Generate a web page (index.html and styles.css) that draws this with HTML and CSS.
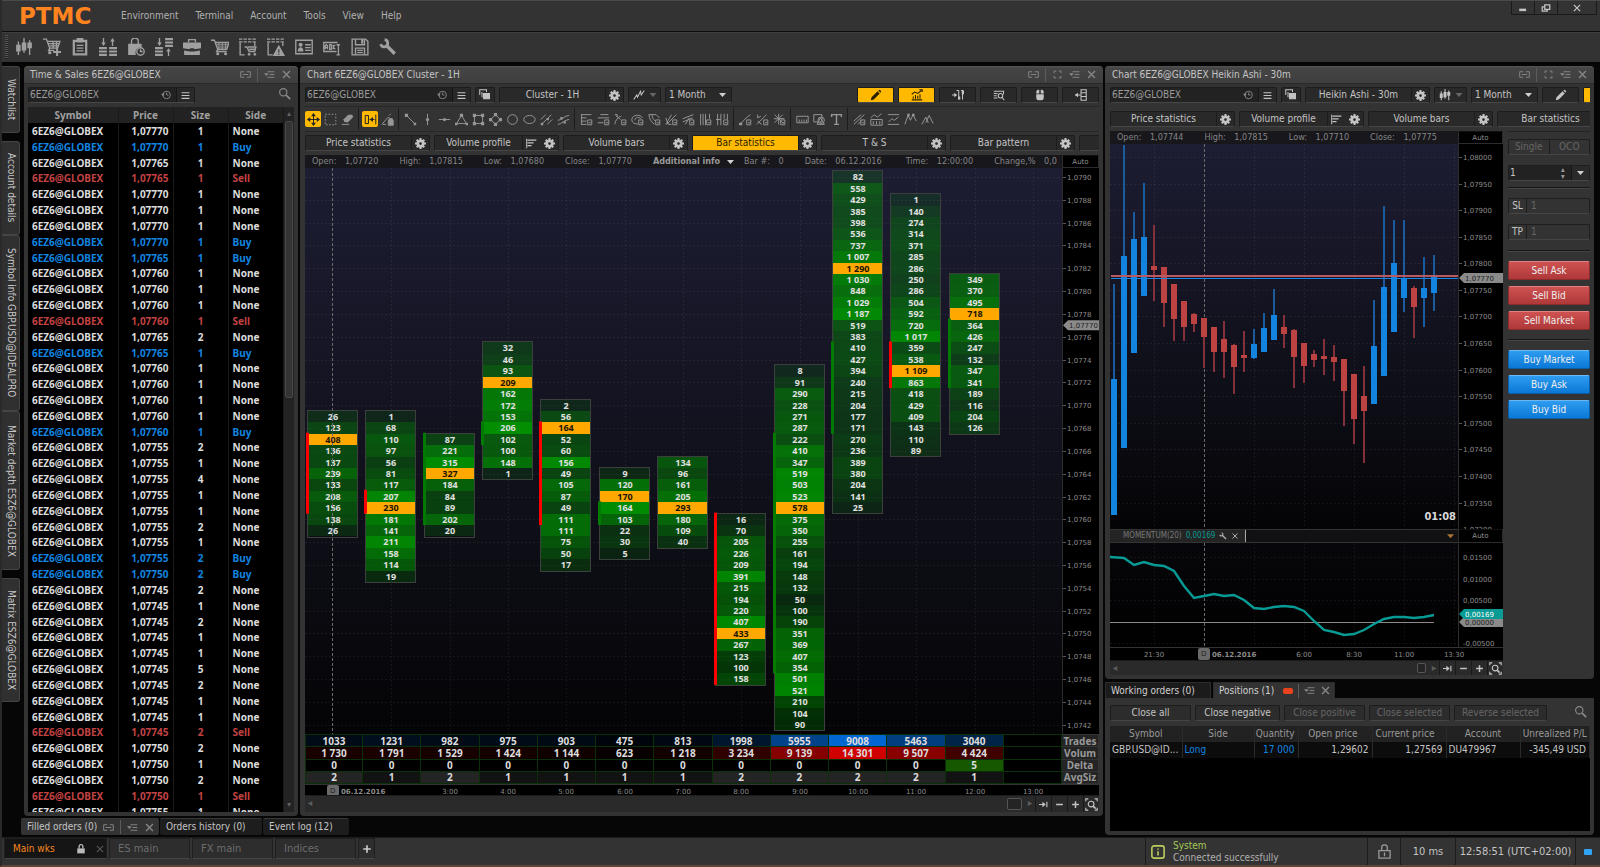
FILE: index.html
```html
<!DOCTYPE html>
<html lang="en">
<head>
  <meta charset="UTF-8">
  <meta name="viewport" content="width=device-width, initial-scale=1.0">
  <title>PTMC</title>
  <link rel="stylesheet" href="styles.css">
</head>
<body>
  <header class="topbar">
    <div class="logo">PTMC</div>
    <nav class="menu">
      <a href="#">Environment</a>
      <a href="#">Terminal</a>
      <a href="#">Account</a>
      <a href="#">Tools</a>
      <a href="#">View</a>
      <a href="#">Help</a>
    </nav>
    <div class="win-controls">
      <button aria-label="Minimize"><svg class="ic" data-icon="minimize"></svg></button>
      <button aria-label="Restore"><svg class="ic" data-icon="restore"></svg></button>
      <button class="wide" aria-label="Close"><svg class="ic" data-icon="close"></svg></button>
    </div>
  </header>

  <div class="toolbar">
    <span class="grip"></span>
    <button aria-label="Chart"><svg class="ic" data-icon="candles"></svg></button>
    <button aria-label="New order"><svg class="ic" data-icon="cartplus"></svg></button>
    <button aria-label="Watchlist"><svg class="ic" data-icon="clipboard"></svg></button>
    <button aria-label="Market depth"><svg class="ic" data-icon="depth"></svg></button>
    <button aria-label="Time and sales"><svg class="ic" data-icon="bag"></svg></button>
    <button aria-label="Matrix"><svg class="ic" data-icon="matrix"></svg></button>
    <button aria-label="Portfolio"><svg class="ic" data-icon="briefcase"></svg></button>
    <button aria-label="Orders"><svg class="ic" data-icon="cart"></svg></button>
    <button aria-label="Order history"><svg class="ic" data-icon="listcart"></svg></button>
    <button aria-label="Alerts"><svg class="ic" data-icon="listalert"></svg></button>
    <button aria-label="Account"><svg class="ic" data-icon="idcard"></svg></button>
    <button aria-label="Symbol info"><svg class="ic" data-icon="abc"></svg></button>
    <button aria-label="Save"><svg class="ic" data-icon="save"></svg></button>
    <button aria-label="Settings"><svg class="ic" data-icon="wrench"></svg></button>
  </div>

  <main class="workspace">
    <aside class="side-tabs">
      <button class="st-1">Watchlist</button>
      <button class="st-2">Account details</button>
      <button class="st-3">Symbol info GBP.USD@IDEALPRO</button>
      <button class="st-4">Market depth ESZ6@GLOBEX</button>
      <button class="st-5">Matrix ESZ6@GLOBEX</button>
    </aside>

    <section class="panel sales">
      <div class="panel-title">
        <h2>Time &amp; Sales 6EZ6@GLOBEX</h2>
        <svg class="ic" data-icon="link"></svg><i></i>
        <svg class="ic" data-icon="menu"></svg>
        <svg class="ic" data-icon="close"></svg>
      </div>
      <div class="row">
        <div class="symbol-box">
          <input type="text" value="6EZ6@GLOBEX" aria-label="Symbol">
          <svg class="ic" data-icon="clock"></svg>
          <button aria-label="Symbol list"><svg class="ic" data-icon="list"></svg></button>
        </div>
        <svg class="ic push search" data-icon="search"></svg>
      </div>
      <div class="sales-wrap">
        <table class="sales-table">
          <thead>
            <tr><th class="c-symbol">Symbol</th><th class="c-price">Price</th><th class="c-size">Size</th><th>Side</th></tr>
          </thead>
          <tbody id="sales-rows"></tbody>
        </table>
        <div class="vscroll"><span>▴</span><b></b><span>▾</span></div>
      </div>
    </section>

    <section class="panel chart-panel">
      <div class="panel-title">
        <h2>Chart 6EZ6@GLOBEX Cluster - 1H</h2>
        <svg class="ic" data-icon="link"></svg><i></i>
        <svg class="ic" data-icon="expand"></svg>
        <svg class="ic" data-icon="menu"></svg>
        <svg class="ic" data-icon="close"></svg>
      </div>
      <div class="row">
        <div class="symbol-box">
          <input type="text" value="6EZ6@GLOBEX" aria-label="Chart symbol">
          <svg class="ic" data-icon="clock"></svg>
          <button aria-label="Symbol list"><svg class="ic" data-icon="list"></svg></button>
        </div>
        <button class="ctl sq" aria-label="Copy"><svg class="ic" data-icon="copy"></svg></button>
        <div class="split"><button>Cluster - 1H</button><button class="gear" aria-label="Settings"><svg class="ic" data-icon="gear"></svg></button></div>
        <button class="ctl mid" aria-label="Line style"><svg class="ic" data-icon="zigzag"></svg><span class="caret dim"></span></button>
        <div class="select"><select aria-label="Period"><option>1 Month</option></select><span class="caret"></span></div>
        <button class="ctl lg on push" aria-label="Draw"><svg class="ic" data-icon="pencil"></svg></button>
        <button class="ctl lg on" aria-label="Indicators"><svg class="ic" data-icon="growth"></svg></button>
        <button class="ctl lg" aria-label="Bars"><svg class="ic" data-icon="barstyle"></svg></button>
        <button class="ctl lg" aria-label="Find"><svg class="ic" data-icon="listsearch"></svg></button>
        <button class="ctl lg" aria-label="Mouse trading"><svg class="ic" data-icon="mouse"></svg></button>
        <button class="ctl lg" aria-label="Side panel"><svg class="ic" data-icon="sidepanel"></svg></button>
      </div>
      <div class="draw-tools" id="draw-tools"></div>
      <div class="row tabs">
        <div class="split"><button>Price statistics</button><button class="gear" aria-label="Settings"><svg class="ic" data-icon="gear"></svg></button></div>
        <div class="split"><button>Volume profile</button><button class="gear" aria-label="Profile"><svg class="ic" data-icon="profile"></svg></button><button class="gear bare" aria-label="Settings"><svg class="ic" data-icon="gear"></svg></button></div>
        <div class="split"><button>Volume bars</button><button class="gear" aria-label="Settings"><svg class="ic" data-icon="gear"></svg></button></div>
        <div class="split"><button class="on">Bar statistics</button><button class="gear" aria-label="Settings"><svg class="ic" data-icon="gear"></svg></button></div>
        <div class="split"><button>T &amp; S</button><button class="gear" aria-label="Settings"><svg class="ic" data-icon="gear"></svg></button></div>
        <div class="split"><button>Bar pattern</button><button class="gear" aria-label="Settings"><svg class="ic" data-icon="gear"></svg></button></div>
        <div class="split"><button aria-label="More"></button></div>
      </div>
      <div class="cluster">
        <div class="info">
          <span>Open: <em>1,07720</em></span>
          <span>High: <em>1,07815</em></span>
          <span>Low: <em>1,07680</em></span>
          <span>Close: <em>1,07770</em></span>
          <b>Additional info <u class="caret"></u></b>
          <span class="near">Bar #: <em>0</em></span>
          <span>Date: <em>06.12.2016</em></span>
          <span class="far">Time: <em>12:00:00</em></span>
          <span>Change,% <em>0,0</em></span>
        </div>
        <button class="auto">Auto</button>
        <svg class="plot" id="cluster-plot"></svg>
        <svg class="axis" id="cluster-axis"></svg>
        <table class="stats" id="stats"></table>
        <svg class="time" id="cluster-time"></svg>
        <div class="hscroll">
          <span class="arrow">◂</span><span class="thumb wide"></span><span class="arrow">▸</span>
          <button aria-label="To end"><svg class="ic" data-icon="toend"></svg></button>
          <button aria-label="Zoom out"><svg class="ic" data-icon="minus"></svg></button>
          <button aria-label="Zoom in"><svg class="ic" data-icon="plus"></svg></button>
          <button aria-label="Fit"><svg class="ic" data-icon="fit"></svg></button>
        </div>
      </div>
    </section>

    <div class="right">
      <section class="panel chart-panel">
        <div class="panel-title">
          <h2>Chart 6EZ6@GLOBEX Heikin Ashi - 30m</h2>
          <svg class="ic" data-icon="link"></svg><i></i>
          <svg class="ic" data-icon="expand"></svg>
          <svg class="ic" data-icon="menu"></svg>
          <svg class="ic" data-icon="close"></svg>
        </div>
        <div class="row">
          <div class="symbol-box">
            <input type="text" value="6EZ6@GLOBEX" aria-label="Chart symbol">
            <svg class="ic" data-icon="clock"></svg>
            <button aria-label="Symbol list"><svg class="ic" data-icon="list"></svg></button>
          </div>
          <button class="ctl sq" aria-label="Copy"><svg class="ic" data-icon="copy"></svg></button>
          <div class="split"><button>Heikin Ashi - 30m</button><button class="gear" aria-label="Settings"><svg class="ic" data-icon="gear"></svg></button></div>
          <button class="ctl mid" aria-label="Chart style"><svg class="ic" data-icon="candles"></svg><span class="caret dim"></span></button>
          <div class="select"><select aria-label="Period"><option>1 Month</option></select><span class="caret"></span></div>
          <button class="ctl lg" aria-label="Draw"><svg class="ic" data-icon="pencil"></svg></button>
          <button class="ctl lg on" aria-label="Indicators"></button>
        </div>
        <div class="row tabs ruled">
          <div class="split"><button>Price statistics</button><button class="gear" aria-label="Settings"><svg class="ic" data-icon="gear"></svg></button></div>
          <div class="split"><button>Volume profile</button><button class="gear" aria-label="Profile"><svg class="ic" data-icon="profile"></svg></button><button class="gear bare" aria-label="Settings"><svg class="ic" data-icon="gear"></svg></button></div>
          <div class="split"><button>Volume bars</button><button class="gear" aria-label="Settings"><svg class="ic" data-icon="gear"></svg></button></div>
          <div class="split"><button>Bar statistics</button><button class="gear" aria-label="Settings"><svg class="ic" data-icon="gear"></svg></button></div>
        </div>
        <div class="heikin-wrap">
          <div class="heikin">
            <div class="info">
              <span>Open: <em>1,07744</em></span>
              <span>High: <em>1,07815</em></span>
              <span>Low: <em>1,07710</em></span>
              <span>Close: <em>1,07775</em></span>
              <b>Additional info</b>
            </div>
            <button class="auto">Auto</button>
            <svg class="plot" id="heikin-plot"></svg>
            <svg class="axis" id="heikin-axis"></svg>
            <div class="indicator">
              <span class="ind-name">MOMENTUM(20) <em>0,00169</em><svg class="ic" data-icon="wrench"></svg><svg class="ic" data-icon="close"></svg></span>
              <span class="caret amber"></span>
            </div>
            <button class="auto">Auto</button>
            <svg class="plot low" id="momentum-plot"></svg>
            <svg class="axis" id="momentum-axis"></svg>
            <svg class="time" id="heikin-time"></svg>
            <div class="hscroll">
              <span class="arrow">◂</span><span class="thumb"></span><span class="arrow">▸</span>
              <button aria-label="To end"><svg class="ic" data-icon="toend"></svg></button>
              <button aria-label="Zoom out"><svg class="ic" data-icon="minus"></svg></button>
              <button aria-label="Zoom in"><svg class="ic" data-icon="plus"></svg></button>
              <button aria-label="Fit"><svg class="ic" data-icon="fit"></svg></button>
            </div>
          </div>
          <form class="order">
            <div class="pair"><button type="button" disabled>Single</button><button type="button" disabled>OCO</button></div>
            <div class="qty"><input type="text" value="1" aria-label="Quantity"><span class="spin"><i>▴</i><i>▾</i></span><button type="button" aria-label="Presets"><span class="caret"></span></button></div>
            <hr>
            <div class="stop"><label for="sl">SL</label><input id="sl" type="text" value="1"></div>
            <div class="stop"><label for="tp">TP</label><input id="tp" type="text" value="1"></div>
            <hr>
            <div class="deals">
              <button type="button" class="sell">Sell Ask</button>
              <button type="button" class="sell">Sell Bid</button>
              <button type="button" class="sell">Sell Market</button>
            </div>
            <hr>
            <div class="deals">
              <button type="button" class="buy">Buy Market</button>
              <button type="button" class="buy">Buy Ask</button>
              <button type="button" class="buy">Buy Bid</button>
            </div>
          </form>
        </div>
      </section>

      <section class="positions">
        <div class="pos-tabs">
          <button>Working orders (0)</button>
          <button class="active">Positions (1) <span class="led"></span><i></i><svg class="ic" data-icon="menu"></svg><svg class="ic" data-icon="close"></svg></button>
        </div>
        <div class="pos-body">
          <div class="pos-buttons">
            <button>Close all</button>
            <button>Close negative</button>
            <button disabled>Close positive</button>
            <button disabled>Close selected</button>
            <button class="last" disabled>Reverse selected</button>
            <svg class="ic push search" data-icon="search"></svg>
          </div>
          <div class="pos-wrap">
            <table class="pos-table">
              <colgroup><col class="w72"><col class="w72"><col class="w44"><col class="w74"><col class="w74"><col class="w74"><col></colgroup>
              <thead>
                <tr><th>Symbol</th><th>Side</th><th class="r">Quantity</th><th class="r mid">Open price</th><th class="l">Current price</th><th>Account</th><th>Unrealized P/L</th></tr>
              </thead>
              <tbody>
                <tr><td>GBP.USD@ID...</td><td class="blue">Long</td><td class="r blue">17 000</td><td class="r">1,29602</td><td class="r">1,27569</td><td>DU479967</td><td class="r">-345,49 USD</td></tr>
              </tbody>
            </table>
          </div>
        </div>
      </section>
    </div>

    <div class="bottom-tabs">
      <button class="active">Filled orders (0) <svg class="ic" data-icon="link"></svg><i></i><svg class="ic" data-icon="menu"></svg><svg class="ic" data-icon="close"></svg></button>
      <button>Orders history (0)</button>
      <button class="short">Event log (12)</button>
    </div>
  </main>

  <footer class="status">
    <div class="wks">
      <button class="active">Main wks <svg class="ic" data-icon="lock"></svg><svg class="ic dim" data-icon="close"></svg></button>
      <button>ES main</button>
      <button>FX main</button>
      <button>Indices</button>
      <button class="add" aria-label="Add workspace"><svg class="ic" data-icon="plus"></svg></button>
    </div>
    <div class="system">
      <svg class="ic" data-icon="info"></svg>
      <p><b>System</b><br>Connected successfully</p>
    </div>
    <div class="cell lock"><svg class="ic" data-icon="lockline"></svg></div>
    <div class="cell ping">10 ms</div>
    <div class="cell time-now">12:58:51 (UTC+02:00)</div>
    <div class="cell net"><span></span></div>
  </footer>

  <script src="script.js"></script>
</body>
</html>
```

FILE: styles.css
```css
*, *::before, *::after {
  box-sizing: border-box;
}

:root {
  --bg: #333;
  --dark: #1c1c1c;
  --ctl: #292929;
  --line: #464646;
  --text: #c4c4c4;
  --muted: #8a8a8a;
  --yellow: #ffb900;
  --blue: #1285e0;
  --red: #c24343;
}

body {
  margin: 0;
  height: 100vh;
  display: flex;
  flex-direction: column;
  overflow: hidden;
  background: var(--bg);
  color: var(--text);
  border-left: 2px solid #2a2a2a;
  border-bottom: 2px solid #5c4638;
  font: 10px/14px "DejaVu Sans Condensed", "Noto Sans", sans-serif;
}

button, input, select {
  font: inherit;
  color: inherit;
  background: none;
  border: 0;
  padding: 0;
  margin: 0;
  min-width: 0;
}

button {
  display: flex;
  align-items: center;
  justify-content: center;
  white-space: nowrap;
}

.ic {
  width: 12px;
  height: 12px;
  flex: none;
  fill: none;
  stroke: currentColor;
  stroke-width: 1.4;
}

.ic .f { fill: currentColor; stroke: none; }
.ic .b { fill: currentColor; }

.push { margin-left: auto; }

.caret {
  width: 7px;
  height: 4px;
  flex: none;
  display: inline-block;
  background: #d0d0d0;
  clip-path: polygon(0 0, 100% 0, 50% 100%);
}
.caret.dim { background: #666; }
.caret.amber { background: #a87432; }

/* header */
.topbar {
  display: flex;
  height: 32px;
  border-top: 1px solid #4a4a4a;
  border-bottom: 1px solid #0c0c0c;
  flex: none;
}

.logo {
  width: 119px;
  padding-left: 17px;
  font: bold 23px/30px "DejaVu Sans", sans-serif;
  color: #ff8420;
}

.menu {
  display: flex;
  gap: 17px;
  align-items: center;
}
.menu a {
  color: #b0b0b0;
  text-decoration: none;
}

.win-controls {
  margin-left: auto;
  margin-right: 3px;
  display: flex;
  height: 14px;
  border: 1px solid #1a1a1a;
  border-top: 0;
}
.win-controls button {
  width: 23px;
  border-right: 1px solid #1a1a1a;
}
.win-controls button.wide {
  width: 38px;
  border-right: 0;
}
.win-controls .ic {
  width: 10px;
  height: 10px;
}

.toolbar {
  display: flex;
  align-items: center;
  gap: 10px;
  height: 32px;
  flex: none;
  padding-left: 3px;
  padding-bottom: 2px;
  border-top: 1px solid #3e3e3e;
  border-bottom: 2px solid #050505;
  color: #a0a0a0;
}
.toolbar .ic, .toolbar button {
  width: 18px;
  height: 18px;
}
.toolbar .ic { stroke-width: 1.2; }
.grip {
  width: 3px;
  height: 24px;
  margin-right: -3px;
  background: repeating-linear-gradient(#555 0 1px, #262626 1px 2px);
}

/* workspace */
.workspace {
  flex: 1;
  min-height: 0;
  display: grid;
  grid-template-columns: 20px 274fr 803fr 489fr;
  grid-template-rows: minmax(0, 1fr) 17px;
  gap: 2px;
  padding: 2px 6px 2px 0;
  background: #060606;
}

.side-tabs {
  display: flex;
  flex-direction: column;
  padding-right: 2px;
}
.side-tabs button {
  writing-mode: vertical-rl;
  background: #303030;
  border: 1px solid #444;
  border-left: 0;
  border-radius: 0 3px 3px 0;
  line-height: 14px;
}
.st-1 { height: 67px; margin-bottom: 8px; }
.st-2 { height: 94px; }
.st-3 { height: 176px; }
.st-4 { height: 159px; margin-bottom: 8px; }
.st-5 { height: 124px; }

.panel {
  display: flex;
  flex-direction: column;
  min-width: 0;
  min-height: 0;
  overflow: hidden;
  padding: 0 4px 4px;
  background: var(--bg);
  border-radius: 4px;
}
.chart-panel { padding: 0 4px 4px 5px; }

.panel-title {
  display: flex;
  align-items: center;
  gap: 6px;
  height: 18px;
  flex: none;
  margin: 0 -5px 3px;
  padding: 0 7px;
  background: linear-gradient(#565656, #454545 2px, #3e3e3e);
  border-bottom: 1px solid #2a2a2a;
  color: #868686;
}
.panel-title .ic, .pos-tabs .ic, .bottom-tabs .ic {
  width: 11px;
  height: 11px;
  color: #868686;
}
.panel-title h2 {
  flex: 1;
  margin: 0;
  font-size: 10px;
  font-weight: normal;
  color: var(--text);
}
.panel-title i, .pos-tabs i, .bottom-tabs i {
  width: 1px;
  height: 14px;
  background: #5c5c5c;
}

.row {
  display: flex;
  gap: 4px;
  height: 16px;
  flex: none;
  align-items: stretch;
}
.row.tabs {
  margin-top: 3px;
  overflow: hidden;
}
.row.ruled { margin-top: 8px; }

.search {
  width: 13px;
  height: 13px;
  margin-right: 3px;
  color: var(--muted);
}

.symbol-box {
  display: flex;
  align-items: center;
  width: 166px;
  background: #222;
  border: 1px solid var(--dark);
  border-bottom-color: var(--line);
  border-radius: 2px;
}
.symbol-box input {
  flex: 1;
  width: 50px;
  padding-left: 1px;
  color: #9c9c9c;
}
.symbol-box > .ic {
  margin-right: 5px;
  width: 10px;
  height: 10px;
  color: var(--muted);
}
.symbol-box button {
  width: 18px;
  height: 14px;
  background: var(--ctl);
  border-left: 1px solid #161616;
}
.symbol-box button .ic {
  width: 9px;
  height: 9px;
}

.ctl, .split, .select {
  display: flex;
  background: var(--ctl);
  border: 1px solid var(--dark);
  border-bottom-color: var(--line);
  border-radius: 2px;
}
.ctl { gap: 5px; }
.ctl.sq { width: 20px; }
.ctl.mid { width: 33px; }
.ctl.lg {
  width: 37px;
  flex: none;
}
.ctl.on, .split .on {
  background: var(--yellow);
  color: #2c2200;
}
.split { width: 125px; }
.split > button { flex: 1; }
.split .gear {
  flex: none;
  width: 18px;
  border-left: 1px solid #1c1c1c;
}
.split .gear .ic {
  width: 11px;
  height: 11px;
}
.split .bare { border-left: 0; }
.tabs .split { flex: none; }
.select {
  align-items: center;
  width: 67px;
  padding: 0 5px 0 3px;
}
.select select {
  flex: 1;
  appearance: none;
}

/* time & sales */
.sales .symbol-box { width: 167px; }

.sales-wrap {
  flex: 1;
  min-height: 0;
  display: flex;
  overflow: hidden;
  margin-top: 4px;
  background: #000;
}
.sales-table {
  flex: 1;
  height: calc(100% + 8px);
  border-collapse: collapse;
  table-layout: fixed;
  font: bold 10px/12px "Noto Sans", sans-serif;
  color: #dcdcdc;
}
.sales-table th {
  height: 16px;
  padding: 0;
  background: #222;
  color: #a0a0a0;
}
.sales-table th, .sales-table td {
  border-right: 1px solid #1a1a1a;
}
.sales-table td {
  padding: 0 4px;
}
.c-symbol { width: 90px; }
.c-price { width: 55px; }
.c-size { width: 55px; }
.sales-table td:nth-child(2) { text-align: right; }
.sales-table td:nth-child(3) { text-align: center; }
.sales-table .buy { color: var(--blue); }
.sales-table .sell { color: var(--red); }

.vscroll {
  width: 10px;
  display: flex;
  flex-direction: column;
  justify-content: space-between;
  align-items: center;
  background: #232323;
  color: #666;
  font-size: 8px;
}
.vscroll b {
  width: 8px;
  flex: 1;
  margin-bottom: 400px;
  background: #343434;
  border: 1px solid #484848;
  border-radius: 2px;
}

/* charts */
.draw-tools {
  display: flex;
  align-items: center;
  gap: 1px;
  height: 26px;
  flex: none;
  margin-top: 3px;
  border-top: 1px solid #272727;
  border-bottom: 1px solid #272727;
  color: #969696;
}
.draw-tools button {
  width: 16px;
  height: 16px;
  flex: none;
  border-radius: 2px;
}
.draw-tools button.on {
  background: var(--yellow);
  color: #222;
}
.draw-tools .ic {
  width: 13px;
  height: 13px;
  stroke-width: 1.2;
}
.draw-tools i {
  width: 1px;
  height: 22px;
  margin: 0 2px;
  background: #1c1c1c;
}

.cluster, .heikin {
  flex: 1;
  min-width: 0;
  min-height: 0;
  display: grid;
  background: #000;
}
.cluster {
  margin-top: 4px;
  grid-template-columns: minmax(0, 1fr) 37px;
  grid-template-rows: 13px minmax(0, 1fr) 50px 11px 17px;
}
.heikin-wrap {
  flex: 1;
  min-height: 0;
  display: flex;
  gap: 5px;
  margin-top: 4px;
}
.heikin {
  grid-template-columns: minmax(0, 1fr) 45px;
  grid-template-rows: 13px minmax(0, 1fr) 14px 104px 13px 15px;
}

.info {
  display: flex;
  gap: 21px;
  overflow: hidden;
  white-space: nowrap;
  padding-left: 7px;
  font-size: 9px;
  line-height: 13px;
  background: #17171c;
  color: #868686;
}
.info em {
  font-style: normal;
  margin-left: 6px;
}
.info b { color: #999; }
.info .caret { margin-left: 4px; }
.info .near { margin-left: -11px; }
.info .far { margin-left: 3px; }

.auto {
  background: #000;
  border: 1px solid #2c2c2c;
  border-top-color: #111;
  color: #909090;
  font: 7px/10px "DejaVu Sans", sans-serif;
}

.plot, .axis, .time {
  display: block;
  width: 100%;
  height: 100%;
  overflow: hidden;
}
.plot { background: linear-gradient(#1d1d33, #0e0e17 65%, #040406); }
.plot.low { background: linear-gradient(#07070b, #000); }
.axis {
  border-left: 1px solid #2c2c2c;
  font: 7px "DejaVu Sans", sans-serif;
  fill: #8c8c8c;
}
.time {
  grid-column: 1 / 3;
  border-top: 1px solid #333;
  font: 7px "DejaVu Sans", sans-serif;
  fill: #8c8c8c;
}
.time .day { font-weight: bold; }
.grid-line {
  stroke: #fff;
  stroke-opacity: .06;
  stroke-dasharray: 2 2;
}
.day-line {
  stroke: #6a6a6a;
  stroke-dasharray: 3 2;
}
.vol {
  font: bold 9px "Noto Sans", sans-serif;
  fill: #e0e0e0;
  text-anchor: middle;
}
.vol.top { fill: #201500; }
.clock {
  font: bold 11px "DejaVu Sans Condensed", sans-serif;
  fill: #d8d8d8;
}

.stats {
  grid-column: 1 / 3;
  width: 100%;
  height: 100%;
  table-layout: fixed;
  border-collapse: collapse;
  border-top: 1px solid #0a300a;
  font: bold 10px/10px "Noto Sans", sans-serif;
  text-align: center;
  color: #dcdcdc;
}
.stats td, .stats th {
  padding: 0;
  border: 1px solid #0a300a;
}
.stats td:first-child { width: 57px; }
.stats th {
  width: 37px;
  background: #242424;
  border-color: #333;
  color: #999;
}

.hscroll {
  grid-column: 1 / 3;
  display: flex;
  align-items: stretch;
  background: #2a2a2a;
  border-top: 1px solid #1c1c1c;
}
.hscroll button {
  width: 16px;
  border-left: 1px solid #1a1a1a;
}
.hscroll button .ic {
  width: 9px;
  height: 9px;
}
.hscroll button:last-child .ic {
  width: 13px;
  height: 13px;
}
.hscroll .arrow {
  width: 10px;
  text-align: center;
  color: #5c5c5c;
}
.hscroll .thumb {
  width: 9px;
  margin: 2px 3px 2px auto;
  border: 1px solid #555;
  border-radius: 2px;
  background: #242424;
}
.hscroll .thumb.wide { width: 15px; }

.indicator {
  display: flex;
  align-items: center;
  justify-content: space-between;
  padding-right: 4px;
  background: #111114;
  border-top: 1px solid #333;
  border-bottom: 1px solid #333;
}
.ind-name {
  display: flex;
  align-items: center;
  gap: 4px;
  width: 136px;
  padding-left: 13px;
  background: #242424;
  border-right: 1px solid #aaa;
  color: #777;
  font-size: 8px;
  line-height: 12px;
}
.ind-name em {
  font-style: normal;
  color: #089a94;
}
.ind-name .ic {
  width: 8px;
  height: 8px;
  stroke-width: 2;
  color: #aaa;
}

/* order entry */
.order {
  width: 82px;
  border-top: 1px solid #232323;
  padding-top: 7px;
}
.pair, .qty, .stop {
  display: flex;
  height: 16px;
  border: 1px solid #1e1e1e;
  border-bottom-color: var(--line);
  border-radius: 2px;
}
.pair button {
  flex: 1;
  color: #666;
}
.pair button:first-child { border-right: 1px solid #1e1e1e; }
.qty {
  margin-top: 10px;
  background: #222;
}
.qty input {
  flex: 1;
  width: 20px;
  padding-left: 1px;
}
.spin {
  display: flex;
  flex-direction: column;
  width: 10px;
  font-size: 8px;
  line-height: 7px;
  color: #999;
}
.spin i { font-style: normal; }
.qty button {
  width: 18px;
  background: #2a2a2a;
  border-left: 1px solid #161616;
}
.order hr {
  margin: 6px 0 9px;
  border: 0;
  border-top: 1px solid #161616;
  border-bottom: 1px solid #454545;
}
.stop { margin-bottom: 10px; }
.stop label {
  width: 18px;
  text-align: center;
  border-right: 1px solid #1e1e1e;
}
.stop input {
  flex: 1;
  width: 20px;
  padding-left: 4px;
  color: #666;
}
.deals {
  display: grid;
  gap: 6px;
  margin-bottom: 9px;
}
.deals button {
  height: 19px;
  border-radius: 2px;
  color: #eee;
}
.deals .sell {
  background: linear-gradient(#cf5252, #ae3838);
  border: 1px solid #8a2c2c;
  border-top-color: #e08080;
}
.deals .buy {
  background: linear-gradient(#2f9cf0, #0a78d6);
  border: 1px solid #0a5ea6;
  border-top-color: #6cb8f4;
}

/* positions */
.right {
  grid-row: 1 / 3;
  grid-column: 4;
  display: grid;
  grid-template-columns: minmax(0, 1fr);
  grid-template-rows: minmax(0, 614fr) minmax(0, 153fr);
  gap: 3px;
}
.right .row .symbol-box { width: 167px; flex: none; }
.right .row .split { width: 125px; flex: none; }
.right .row { overflow: hidden; }
.right .select, .right .ctl { flex: none; }

.positions {
  display: flex;
  flex-direction: column;
}
.pos-tabs {
  display: flex;
  gap: 2px;
  height: 16px;
}
.pos-tabs button {
  width: 106px;
  background: #1b1b1b;
  border: 1px solid #2c2c2c;
  border-bottom: 0;
  justify-content: flex-start;
  padding-left: 5px;
  color: #d0d0d0;
}
.pos-tabs .active {
  width: 122px;
  gap: 5px;
  background: var(--bg);
}
.led {
  width: 10px;
  height: 6px;
  margin-left: 4px;
  border-radius: 2px;
  background: #e8431d;
}
.pos-body {
  flex: 1;
  display: flex;
  flex-direction: column;
  padding: 7px 4px 4px 5px;
  background: var(--bg);
  border-radius: 0 0 4px 4px;
}
.pos-buttons {
  display: flex;
  gap: 4px;
  height: 16px;
}
.pos-buttons button {
  width: 81px;
  border: 1px solid #1c1c1c;
  border-bottom-color: var(--line);
  border-radius: 2px;
  background: #2c2c2c;
}
.pos-buttons button:nth-child(2) { width: 85px; }
.pos-buttons button:disabled { color: #666; }
.pos-buttons .last { width: 93px; }
.pos-wrap {
  flex: 1;
  margin-top: 5px;
  background: #000;
}
.pos-table {
  width: 100%;
  table-layout: fixed;
  border-collapse: collapse;
  text-align: left;
}
.pos-table th {
  height: 16px;
  padding: 0;
  background: #222;
  font-weight: normal;
  text-align: center;
  color: #999;
}
.pos-table th, .pos-table td { border-right: 1px solid #2a2a2a; }
.pos-table td {
  height: 16px;
  padding: 0 2px;
  background: #0c0c0c;
  white-space: nowrap;
}
.pos-table .l { text-align: left; padding-left: 3px; }
.pos-table .r { text-align: right; padding-right: 3px; }
.pos-table .mid { padding-right: 14px; }
.pos-table .blue { color: var(--blue); }
.w72 { width: 72px; }
.w44 { width: 44px; }
.w74 { width: 74px; }

/* bottom */
.bottom-tabs {
  grid-column: 1 / 4;
  grid-row: 2;
  display: flex;
  gap: 1px;
  padding-left: 19px;
}
.bottom-tabs button {
  width: 102px;
  justify-content: flex-start;
  padding-left: 6px;
  background: #1d1d1d;
  border-top: 1px solid #383838;
  border-radius: 2px;
}
.bottom-tabs .active {
  width: 138px;
  gap: 6px;
  background: var(--bg);
}
.bottom-tabs .short { width: 86px; }

.status {
  display: flex;
  height: 28px;
  flex: none;
  border-top: 1px solid #1c1c1c;
}
.wks {
  display: flex;
  gap: 2px;
  height: 21px;
  padding-left: 2px;
  margin-right: auto;
}
.wks button {
  width: 81px;
  justify-content: flex-start;
  padding-left: 8px;
  border: 1px solid #1e1e1e;
  border-bottom-color: #454545;
  background: #2d2d2d;
  color: #6c6c6c;
  font-size: 11px;
}
.wks .active {
  width: 103px;
  background: #151515;
  color: #f5871f;
  font-size: 10px;
  gap: 9px;
}
.wks .ic {
  width: 10px;
  height: 10px;
}
.wks .active .ic:first-of-type { margin-left: 12px; color: #bbb; }
.wks .ic.dim { color: #555; }
.wks .add {
  width: 17px;
  padding: 0;
  justify-content: center;
  color: #ccc;
}
.system {
  display: flex;
  align-items: center;
  gap: 8px;
  width: 222px;
  padding-left: 5px;
  border-left: 1px solid #1c1c1c;
  color: #b9cf5c;
}
.system .ic {
  width: 14px;
  height: 14px;
}
.system p {
  margin: 0;
  line-height: 12px;
  color: #b0b0b0;
}
.system b {
  font-weight: normal;
  color: #a3c956;
}
.cell {
  display: flex;
  align-items: center;
  justify-content: center;
  border-left: 1px solid #1c1c1c;
  font-size: 11px;
}
.cell.lock {
  width: 33px;
  color: #999;
}
.cell.lock .ic {
  width: 15px;
  height: 15px;
}
.cell.ping { width: 55px; }
.cell.time-now { width: 120px; }
.cell.net { width: 25px; }
.cell.net span {
  width: 8px;
  height: 6px;
  border-radius: 1px;
  background: #2fa4f2;
}
```

FILE: script.js
```js
// icon set, every icon lives in a 16x16 box
const ICONS = {
  minimize: '<path class="f" d="M2 9h11v4H2z"/>',
  restore: '<path stroke-width="2" d="M6 3h8v7H6zM6 6H2v7h8v-3"/>',
  close: '<path stroke-width="2" d="M3 3l10 10M13 3L3 13"/>',
  link: '<path d="M6 4H1v8h5M10 4h5v8h-5M4 8h8"/>',
  menu: '<path d="M5 4h10M8 8h7M5 12h10"/><path class="f" d="M0 6h7L3.500 10z"/>',
  expand: '<path d="M3 6V3h3M10 3h3v3M13 10v3h-3M6 13H3v-3"/>',
  search: '<circle cx="6.500" cy="6.500" r="4.500"/><path stroke-width="2" d="M10 10l5 5"/>',
  clock: '<circle cx="9" cy="8" r="6"/><path d="M9 4v4h3"/><path class="f" d="M0 6h6L3 10z"/>',
  list: '<path stroke-width="2" d="M1 3h14M1 8h14M1 13h14"/>',
  copy: '<path d="M1 8V1h9v3M4 11V4"/><path class="b" d="M6 6h8v7H6z"/>',
  gear: '<circle cx="8" cy="8" r="4" stroke-width="4"/><path stroke-width="3" d="M8 0v4M8 12v4M0 8h4M12 8h4M2.500 2.500l2.500 2.500M11 11l2.500 2.500M13.500 2.500L11 5M5 11l-2.500 2.500"/>',
  zigzag: '<path d="M1 14l4-6 1 3 4-8 1 5 4-6"/>',
  pencil: '<path class="f" d="M1 15l1-4 8-8 3 3-8 8zM11 2l2-1 2 2-1 2z"/>',
  growth: '<path d="M1 14.500h14M3 13v-3M6 13V8M9 13V9M12 13V7"/><path d="M1 7l4-3 4 2 5-4M11 1h4v3"/>',
  barstyle: '<path d="M0 8h5M9 2v12M6 2h3M14 2v12M12 2h3"/><path class="f" d="M3 5l4 3-4 3zM8 10h3v4H8zM13 2h3v5h-3z"/>',
  listsearch: '<path d="M1 3h14M1 6h5M1 9h4M1 12h5M14 3v4"/><circle cx="10" cy="9" r="3"/><path d="M12 11l3 4"/>',
  mouse: '<path class="f" d="M3 7h10v5a3 3 0 0 1-3 3H6a3 3 0 0 1-3-3zM3 6V4a3 3 0 0 1 3-3h1v5zM9 6V1h1a3 3 0 0 1 3 3v2z"/>',
  sidepanel: '<path d="M8 1h7v14H8zM8 5h7M8 10h7M0 8h7"/><path class="f" d="M0 8l4-3v6z"/>',
  profile: '<path d="M1 1v14"/><path stroke-width="2" d="M2 3h13M2 7h9M2 11h6"/>',
  candles: '<path d="M3 3v12M8 0v13M13 2v13"/><path class="f" d="M1 6h4v6H1zM6 4h4v7H6zM11 4h4v5h-4z"/>',
  cart: '<path d="M0 2h3l3 8h8l2-6H4M6 10l-1 2h9"/><path d="M5 6h10M6 8h9M7 4v6M10 4v6M13 4v6" stroke-width=".8"/><circle class="f" cx="6" cy="14" r="1.400"/><circle class="f" cx="13" cy="14" r="1.400"/>',
  cartplus: '<path d="M0 1h3l3 8h7l2-6H4M6 9l-1 2h5M5 5h9M6 7h8M9 3v6M12 3v6"/><circle class="f" cx="6" cy="13" r="1.500"/><path stroke-width="1.800" d="M12.500 9v7M9 12.500h7"/>',
  clipboard: '<path stroke-width="2" d="M2.500 2.500h11v12h-11z"/><path class="f" d="M5 0h6v4H5z"/><path d="M5 6.500h6M5 9h6M5 11.500h6"/>',
  depth: '<path stroke-width="1.800" d="M0 9h7M0 12h7M0 15h7M9 9h7M9 12h7M9 15h7"/><path d="M4 0v6M12 7V1"/><path class="f" d="M2 4h4L4 7zM10 3h4l-2-3z"/>',
  bag: '<path class="f" d="M1 5h12v3a5 5 0 0 0-5 7H1z"/><path d="M4 7V3a3 3 0 0 1 6 0v3"/><circle cx="12" cy="12" r="3.300"/><path d="M12 10v2h2"/>',
  matrix: '<path stroke-width="1.800" d="M0 9h7M0 12h7M0 15h7M9 1h7M9 4h7M9 7h7"/><path d="M4 0v6M12 16v-6"/><path class="f" d="M2 4h4L4 7zM10 12h4l-2-3z"/>',
  briefcase: '<path class="f" d="M0 4h16v5l-6 1V9H6v1L0 9zM1 11l5 1h4l5-1v4H1z"/><path d="M5 4V1.500h6V4"/>',
  listcart: '<path stroke-dasharray="3 1" d="M0 1h15M0 3.500h15"/><path d="M1 4v11h4M14 4v3M5 8h2l2 4h5l1-4H8M9 10h6"/><circle class="f" cx="9" cy="14.500" r="1.200"/><circle class="f" cx="14" cy="14.500" r="1.200"/>',
  listalert: '<path stroke-dasharray="3 1" d="M0 1h15M0 3.500h15"/><path d="M1 4v11h4M14 4v3"/><path class="f" fill-rule="evenodd" d="M10.500 6L16 16H5zM10 10v3h1v-3zM10 14v1h1v-1z"/>',
  idcard: '<path d="M.7 2h14.600v12H.7z"/><circle class="f" cx="5" cy="6" r="1.800"/><path class="f" d="M2.500 12c0-5 5-5 5 0z"/><path d="M9 6h5M9 8.500h5M9 11h5"/>',
  abc: '<path d="M13 4H.7v8H12M2 10V7l1-1 1 1v3M2 8.500h2M6 6v4h1.500l.5-1-.5-1 .5-1-.5-1zM11 6.500H9.500v3H11M12 6h3M13.700 6v9M12 15h3"/>',
  save: '<path d="M1 1h12l2 2v12H1z"/><path d="M4 1v5h8V1M4 15V9h8v6M5.500 11h5M5.500 13h5"/><path class="f" d="M9 1h2v4H9z"/>',
  wrench: '<path stroke-width="3" d="M6 6l8 8"/><path stroke-width="2.400" d="M5 1.500a3.200 3.200 0 1 1-3.500 4"/>',
  lock: '<path class="f" d="M2 7h12v8H2z"/><path stroke-width="2" d="M5 7V4a3 3 0 0 1 6 0v3"/>',
  lockline: '<path d="M2 7h12v8H2zM5 7V4a3 3 0 0 1 6 0v3M8 9v4"/>',
  info: '<rect x="1" y="1" width="14" height="14" rx="2.500" stroke-width="1.800"/><path stroke-width="1.800" d="M8 7v5M8 4v1.500"/>',
  plus: '<path stroke-width="2.600" d="M8 2v12M2 8h12"/>',
  minus: '<path stroke-width="2.600" d="M2 8h12"/>',
  toend: '<path stroke-width="2" d="M0 8h9M14 3v10"/><path class="f" d="M6 3l6 5-6 5z"/>',
  fit: '<path d="M1 4V1h3M12 1h3v3M15 12v3h-3M4 15H1v-3"/><circle cx="7.500" cy="7.500" r="3.500"/><path stroke-width="2" d="M10 10l3 3"/>',
  move: '<path d="M8 1v14M1 8h14"/><path class="f" d="M8 0l3 4H5zM8 16l3-4H5zM0 8l4-3v6zM16 8l-4-3v6z"/>',
  marquee: '<path stroke-dasharray="2 2" d="M1.500 1.500h13v13h-13z"/>',
  eraser: '<path class="f" d="M9 2h5l1 3-6 6H4L3 8z"/><path d="M1 14h9M3 8l5 4"/>',
  snap: '<path d="M1.500 3h4v10h-4zM14.500 2v12M7 8h6"/><path class="f" d="M7 8l4-3v6z"/>',
  drawlock: '<path d="M1 14L9 5l2 2M2 14h4M10 3l2-2"/><path class="b" d="M9 9h6v6H9zM10 9V7h4v2"/>',
  line: '<path d="M3 3l10 10"/><path class="f" d="M1 1h4v4H1zM12 12h3v3h-3z"/>',
  vline: '<path d="M8 1v14"/><circle class="f" cx="8" cy="8" r="2"/>',
  hline: '<path d="M1 8h14"/><circle class="f" cx="8" cy="8" r="2"/>',
  tri: '<path d="M8 3l6 10H2z"/><path class="f" d="M6 1h4v4H6zM0 12h3v3H0zM13 12h3v3h-3z"/>',
  rect: '<path d="M3 3h10v10H3z"/><path class="f" d="M1 1h4v4H1zM11 1h4v4h-4zM1 11h4v4H1zM11 11h4v4h-4z"/>',
  rhomb: '<path d="M8 2l6 6-6 6-6-6z"/><path class="f" d="M6 0h4v4H6zM6 12h4v4H6zM0 6h4v4H0zM12 6h4v4h-4z"/>',
  circle: '<circle cx="8" cy="8" r="6"/>',
  oval: '<ellipse cx="8" cy="8" rx="7" ry="5"/>',
  channel: '<path d="M1 8l6-6M3 13L14 2M9 14l6-6"/><path class="f" d="M1 12h3v3H1zM8 6h3v3H8z"/>',
  parallel: '<path d="M1 9c5 0 8-6 14-6M1 14c5 0 8-6 14-6"/><path class="f" d="M4 5h3v3H4zM8 10h3v3H8z"/>',
  fibo: '<path d="M1 2h13M1 6h7M1 10h7M1 14h7M2 2v12"/>{F}',
  fibo2: '<path d="M4 2h10M1 6h14M1 12h7"/>{F}',
  fan: '<path d="M1 14C2 8 5 5 9 4M2 3l6 5M1 2h3v3"/>{F}',
  spiral: '<path d="M14 6c-2-5-13-4-13 2s8 6 8 5M12 7c-3-3-8-1-7 2"/>{F}',
  arcs: '<path d="M1 2c1 6 3 9 7 12M5 2c0 4 2 6 4 8M1 2h9l4 4"/>{F}',
  pitch: '<path d="M1 14L8 2M2 14L14 2M1 6l3 8h4"/>{F}',
  pitch2: '<path d="M1 7l13-5M1 11l12-5M4 14l5-8"/>{F}',
  vlines: '<path d="M2 1v14M5 1v14M8 1v14M13 1v6"/>{F}',
  vlines2: '<path d="M2 1v14M6 1v14M14 1v7M0 8h6M10 1v6"/>{F}',
  gann: '<path d="M1 14l8-8 5-4"/><path class="f" d="M0 12h4v3H0z"/>{F}',
  gannfan: '<path d="M2 2v4l4-2M1 14L13 2M2 10l5 4"/>{F}',
  ganngrid: '<path d="M2 2l11 11M2 12L12 2M7 1v13M1 7h13"/>{F}',
  ruler: '<path d="M1 4h14v8H1zM4 8v3M7 8v3M10 8v3M13 8v3"/>',
  shapes: '<path d="M1 2h10v9H1zM5 14h9L9 6z"/><circle cx="10" cy="9" r="4"/>',
  text: '<path stroke-width="1.800" d="M2 5V2h12v3M8 2v12M5 14h6"/>',
  zones: '<path d="M1 10l9-8M1 14L14 2M6 14l5-5"/>{F}',
  abcwave: '<path d="M1 6l4-4 4 3 5-4M1 8h14v7H1zM4 10v4M8 10v4M12 10v4"/>',
  trend: '<path d="M1 2h14M1 14h14M2 11l4-4 3 2 5-4"/>',
  wave: '<path d="M1 14L5 3l3 6 3-7 4 8"/><path class="f" d="M4 1h3v3H4zM10 1h3v3h-3z"/>',
  peak: '<path d="M1 14l5-9 3 7M6 12l4-9 5 10"/>'
};
const FIBO_MARK = '<path d="M9.500 8.500h5v6h-5zM11 12h3"/>';

function icon(svg) {
  svg.setAttribute('viewBox', '0 0 16 16');
  svg.innerHTML = ICONS[svg.dataset.icon].replace('{F}', FIBO_MARK);
}

// drawing tools, grouped
const tools = [
  ['move', 'marquee', 'eraser'],
  ['snap', 'drawlock'],
  ['line', 'vline', 'hline', 'tri', 'rect', 'rhomb', 'circle', 'oval', 'channel', 'parallel'],
  ['fibo', 'fibo2', 'fan', 'spiral', 'arcs', 'pitch', 'pitch2', 'vlines', 'vlines2'],
  ['gann', 'gannfan', 'ganngrid'],
  ['ruler', 'shapes', 'text'],
  ['zones', 'abcwave', 'trend', 'wave', 'peak']
];
document.getElementById('draw-tools').innerHTML = tools.map(group =>
  group.map(t => `<button class="${t === 'move' || t === 'snap' ? 'on' : ''}" aria-label="${t}"><svg class="ic" data-icon="${t}"></svg></button>`).join('')
).join('<i></i>');

document.querySelectorAll('[data-icon]').forEach(icon);

// time & sales: last two digits of price, size, side
const sales = '70 1 N,70 1 B,65 1 N,65 1 S,70 1 N,70 1 N,70 1 N,70 1 B,65 1 B,60 1 N,60 1 N,60 1 N,60 1 S,65 2 N,65 1 B,' +
  '60 1 N,60 1 N,60 1 N,60 1 N,60 1 B,55 2 N,55 1 N,55 4 N,55 1 N,55 1 N,55 2 N,55 1 N,55 2 B,50 2 B,45 2 N,45 1 N,45 2 N,' +
  '45 1 N,45 1 N,45 5 N,45 2 N,45 1 N,45 1 N,45 2 S,50 2 N,50 1 N,50 2 N,50 1 S,55 1 N';
const sides = { N: 'None', B: 'Buy', S: 'Sell' };
document.getElementById('sales-rows').innerHTML = sales.split(',').map(row => {
  const [price, size, side] = row.split(' ');
  return `<tr class="${sides[side].toLowerCase()}"><td>6EZ6@GLOBEX</td><td>1,077${price}</td><td>${size}</td><td>${sides[side]}</td></tr>`;
}).join('');

// bar statistics under the cluster chart
const fmt = n => n > 999 ? Math.floor(n / 1000) + ' ' + String(n % 1000).padStart(3, '0') : String(n);
const trades = [1033, 1231, 982, 975, 903, 475, 813, 1998, 5955, 9008, 5463, 3040];
const volume = [1730, 1791, 1529, 1424, 1144, 623, 1218, 3234, 9139, 14301, 9507, 4424];
const delta = [0, 0, 0, 0, 0, 0, 0, 0, 0, 0, 0, 5];
const avg = [2, 1, 2, 1, 1, 1, 1, 2, 2, 2, 2, 1];
function statRow(label, data, text, color) {
  const max = Math.max(...data);
  return '<tr>' + data.map(v => `<td style="background:rgba(${color},${(v / max).toFixed(2)})">${text(v)}</td>`).join('') +
    `<td></td><th>${label}</th></tr>`;
}
document.getElementById('stats').innerHTML =
  statRow('Trades', trades, String, '0,102,210') +
  statRow('Volum', volume, fmt, '208,0,0') +
  statRow('Delta', delta, String, '22,88,0') +
  statRow('AvgSiz', avg, String, '36,36,36');

// clusters: first price row, volumes, open/close rows and their colour
const clusters = [
  { row: 21, v: [26, 123, 408, 136, 137, 239, 133, 208, 156, 138, 26], bar: [23, 29, 'red'] },
  { row: 21, v: [1, 68, 110, 97, 56, 81, 117, 207, 230, 181, 141, 211, 158, 114, 19], bar: [28, 29, 'red'] },
  { row: 23, v: [87, 221, 315, 327, 184, 84, 89, 202, 20], bar: [23, 30, 'green'] },
  { row: 15, v: [32, 46, 93, 209, 162, 172, 153, 206, 102, 100, 148, 1], bar: [22, 23, 'green'] },
  { row: 20, v: [2, 56, 164, 52, 60, 156, 49, 105, 87, 49, 111, 111, 75, 50, 17], bar: [22, 30, 'red'] },
  { row: 26, v: [9, 120, 170, 164, 103, 22, 30, 5], bar: [29, 30, 'green'] },
  { row: 25, v: [134, 96, 161, 205, 293, 180, 109, 40] },
  { row: 30, v: [16, 70, 205, 226, 209, 391, 215, 194, 220, 407, 433, 267, 123, 100, 158], bar: [30, 44, 'red'] },
  { row: 17, v: [8, 91, 290, 228, 271, 287, 222, 410, 347, 519, 503, 523, 578, 375, 350, 255, 161, 194, 148, 132, 50, 100, 190, 351, 369, 407, 354, 501, 521, 210, 104, 90], bar: [23, 43, 'green'] },
  { row: 0, v: [82, 558, 429, 385, 398, 536, 737, 1007, 1290, 1030, 848, 1029, 1187, 519, 383, 410, 427, 394, 240, 215, 204, 177, 171, 270, 236, 389, 380, 204, 141, 25], bar: [15, 22, 'green'] },
  { row: 2, v: [1, 140, 274, 314, 371, 285, 286, 250, 286, 504, 592, 720, 1017, 359, 538, 1109, 863, 418, 429, 409, 143, 110, 89], bar: [15, 18, 'red'] },
  { row: 9, v: [349, 370, 495, 718, 364, 426, 247, 132, 347, 341, 189, 116, 204, 126], bar: [13, 18, 'green'] }
];

// heikin ashi candles: wick top, body top, body bottom, wick bottom
const candles = [
  [140, 235, 371, 371, 'b'], [1, 112, 304, 304, 'b'], [68, 95, 209, 209, 'b'], [39, 93, 152, 152, 'b'],
  [81, 122, 126, 157, 'r'], [123, 123, 159, 183, 'r'], [140, 140, 175, 197, 'r'], [157, 157, 183, 197, 'r'],
  [169, 170, 180, 188, 'r'], [174, 174, 193, 224, 'r'], [183, 183, 208, 228, 'r'], [177, 195, 208, 234, 'r'],
  [200, 201, 223, 250, 'r'], [187, 211, 214, 228, 'r'], [185, 200, 214, 215, 'b'], [169, 184, 208, 208, 'b'],
  [145, 171, 196, 196, 'b'], [171, 183, 190, 204, 'r'], [185, 186, 213, 244, 'r'], [199, 199, 222, 239, 'r'],
  [206, 210, 216, 223, 'r'], [195, 212, 215, 231, 'r'], [201, 213, 218, 237, 'r'], [215, 215, 247, 282, 'r'],
  [230, 230, 275, 300, 'r'], [222, 252, 267, 319, 'r'], [156, 202, 260, 260, 'b'], [62, 143, 232, 232, 'b'],
  [76, 119, 188, 188, 'b'], [76, 134, 154, 168, 'b'], [142, 144, 163, 194, 'r'], [113, 144, 154, 183, 'b'],
  [111, 132, 149, 167, 'b']
];
const momentum = [14, 15, 22, 19, 22, 23, 28, 43, 55, 53, 51, 53, 52, 57, 65, 66, 64, 63, 64, 68, 78, 87, 89, 92, 91, 87, 81, 76, 74, 74, 75, 74, 72];

function draw(svg, name, attrs, text) {
  const el = document.createElementNS('http://www.w3.org/2000/svg', name);
  for (const k in attrs) el.setAttribute(k, attrs[k]);
  if (text !== undefined) el.textContent = text;
  svg.appendChild(el);
}

function clear(id) {
  const svg = document.getElementById(id);
  svg.innerHTML = '';
  return svg;
}

function priceTag(axis, y, text, fill, color) {
  draw(axis, 'path', { d: `M0 ${y}l5 -5h60v10h-60z`, fill });
  draw(axis, 'text', { x: 6, y: y + 3, style: `fill:${color}` }, text);
}

function drawCluster() {
  const plot = clear('cluster-plot'), axis = clear('cluster-axis'), time = clear('cluster-time');
  const w = plot.clientWidth, h = plot.clientHeight;
  const x = i => Math.round(28 + i * (w - 28) / 12.5);
  const rowH = h / 49.6;
  const y = r => 9 + r * rowH;

  for (let r = 0; r <= 48; r += 2) {
    draw(plot, 'path', { class: 'grid-line', d: `M0 ${Math.round(y(r)) + .5}H${w}` });
    draw(axis, 'path', { d: `M0 ${Math.round(y(r)) + .5}h3`, stroke: '#555' });
    draw(axis, 'text', { x: 4, y: y(r) + 3 }, '1,0' + (790 - r));
  }
  for (let i = 1; i <= 12; i++) {
    draw(plot, 'path', { class: 'grid-line', d: `M${x(i) + .5} 0V${h}` });
  }
  priceTag(axis, y(13), '1,07770', '#8a8a8a', '#222');

  clusters.forEach((c, i) => {
    const max = Math.max(...c.v);
    const left = x(i) - 26;
    c.v.forEach((v, k) => {
      const top = Math.round(y(c.row + k) - rowH / 2);
      const bottom = Math.round(y(c.row + k + 1) - rowH / 2);
      const fill = v === max ? '#ffa800' : `rgba(0,150,0,${(.15 + .8 * v / max).toFixed(2)})`;
      draw(plot, 'rect', { x: left, y: top, width: 51, height: bottom - top, fill });
      draw(plot, 'text', { class: v === max ? 'vol top' : 'vol', x: x(i), y: top + 9 }, fmt(v));
    });
    const top = Math.round(y(c.row) - rowH / 2);
    draw(plot, 'rect', { x: left + .5, y: top - .5, width: 50, height: Math.round(c.v.length * rowH) + 1, fill: 'none', stroke: '#3c403c' });
    if (c.bar) {
      const from = y(c.bar[0]) - rowH / 2 - 1, to = y(c.bar[1]) + rowH / 2;
      draw(plot, 'rect', { x: left - 1, y: from, width: 3, height: to - from, fill: c.bar[2] === 'red' ? '#f00' : '#007a00' });
    }
  });
  draw(plot, 'path', { class: 'day-line', d: `M${x(0) - .5} 0V${h}` });

  draw(time, 'rect', { x: x(0) - 6, y: 0, width: 12, height: 11, rx: 2, fill: '#6a6a6a' });
  draw(time, 'text', { x: x(0) - 3, y: 8, style: 'fill:#222' }, 'D');
  draw(time, 'text', { class: 'day', x: x(0) + 8, y: 9 }, '06.12.2016');
  for (let i = 2; i <= 12; i++) {
    draw(time, 'text', { x: x(i), y: 9, 'text-anchor': 'middle' }, (i + 1) + ':00');
  }
}

function drawHeikin() {
  const plot = clear('heikin-plot'), axis = clear('heikin-axis'), time = clear('heikin-time');
  const low = clear('momentum-plot'), lowAxis = clear('momentum-axis');
  const w = plot.clientWidth, h = plot.clientHeight, lh = low.clientHeight;
  const x = i => Math.round(4 + i * (w - 4) / 34.4);
  const y = v => v * h / 385;

  for (let i = 0; i <= 14; i++) {
    const gy = Math.round(y(13 + i * 26.58));
    draw(plot, 'path', { class: 'grid-line', d: `M0 ${gy + .5}H${w}` });
    draw(axis, 'path', { d: `M0 ${gy + .5}h3`, stroke: '#555' });
    draw(axis, 'text', { x: 4, y: gy + 3 }, '1,0' + (8000 - i * 50));
  }
  const labels = ['21:30', '', '', '6:00', '8:30', '11:00', '13:30'];
  labels.forEach((t, k) => {
    const gx = x(4 + k * 5);
    const cls = k === 1 ? 'day-line' : 'grid-line';
    draw(plot, 'path', { class: cls, d: `M${gx + .5} 0V${h}` });
    draw(low, 'path', { class: cls, d: `M${gx + .5} 0V${lh}` });
    draw(time, 'text', { x: gx, y: 9, 'text-anchor': 'middle' }, t);
  });
  draw(time, 'rect', { x: x(9) - 6, y: 0, width: 12, height: 12, rx: 2, fill: '#6a6a6a' });
  draw(time, 'text', { x: x(9) - 3, y: 8, style: 'fill:#222' }, 'D');
  draw(time, 'text', { class: 'day', x: x(9) + 8, y: 9 }, '06.12.2016');

  candles.forEach(([wt, bt, bb, wb, c], i) => {
    const up = c === 'b';
    draw(plot, 'rect', { x: x(i) - 1, y: y(wt), width: 2, height: y(wb - wt), fill: up ? '#195b9c' : '#84303a' });
    draw(plot, 'rect', { x: x(i) - 3, y: y(bt), width: 6, height: y(bb - bt), fill: up ? '#1284e0' : '#bd4242' });
  });
  draw(plot, 'rect', { x: 1, y: y(131), width: w, height: 2, fill: '#b85a64' });
  draw(plot, 'rect', { x: 1, y: y(134), width: w, height: 1, fill: '#1a88e4' });
  priceTag(axis, y(134), '1,07770', '#8a8a8a', '#222');
  draw(plot, 'text', { class: 'clock', x: w - 2, y: h - 9, 'text-anchor': 'end' }, '01:08');

  [['0,01500', 14], ['0,01000', 36], ['0,00500', 57], ['-0,00500', 100]].forEach(([t, gy]) => {
    draw(low, 'path', { class: 'grid-line', d: `M0 ${gy + .5}H${w}` });
    draw(lowAxis, 'text', { x: 4, y: gy + 3 }, t);
  });
  draw(low, 'path', { d: `M0 79.500H${x(32)}`, stroke: '#8a8a8a' });
  const pts = momentum.map((v, i) => `${i ? x(i) : 0},${v}`).join(' ');
  draw(low, 'polyline', { points: pts, fill: 'none', stroke: '#089a94', 'stroke-width': 2.4 });
  priceTag(lowAxis, 79, '0,00000', '#8a8a8a', '#222');
  priceTag(lowAxis, 71, '0,00169', '#089a94', '#fff');
}

function drawAll() {
  drawCluster();
  drawHeikin();
}
drawAll();
window.addEventListener('resize', drawAll);
```
